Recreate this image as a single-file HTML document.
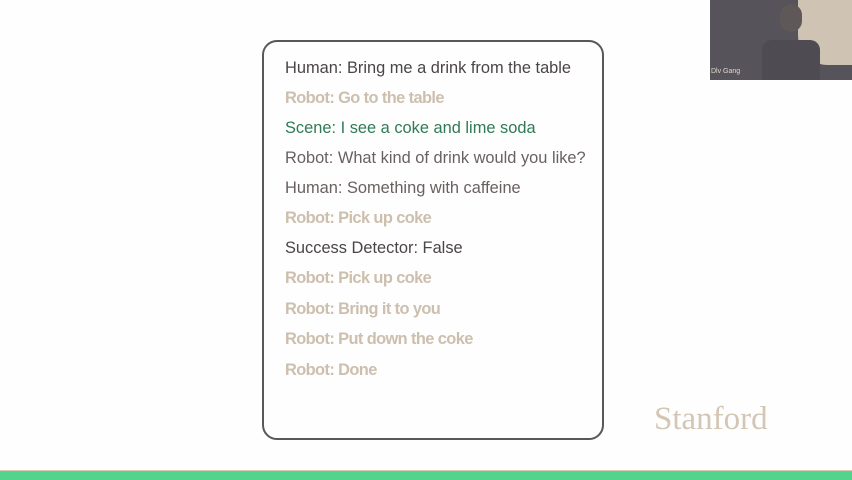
<!DOCTYPE html>
<html><head><meta charset="utf-8"><style>
html,body{margin:0;padding:0;width:852px;height:480px;overflow:hidden;background:#fefefe;position:relative;font-family:"Liberation Sans",sans-serif}
.box{position:absolute;left:262px;top:40px;width:338px;height:396px;border:2px solid #5a565a;border-radius:15px}
.l{position:absolute;left:285px;font-size:16.4px;line-height:18px;white-space:nowrap}
.d{color:#4a4548}.r{color:#cdbfae;font-weight:bold;letter-spacing:-0.6px}.g{color:#2f7a56}.m{color:#6a6060}
.cam{position:absolute;left:710px;top:0;width:142px;height:80px;background:#57535b;overflow:hidden}
.stan{position:absolute;left:654px;top:401px;font-family:"Liberation Serif",serif;font-size:33px;color:#d4c6b4}
.bar{position:absolute;left:0;top:470px;width:852px;height:10px;background:#52d48c;border-top:1px solid #d6c8b4}
</style></head><body>
<div class="box"></div>
<div class="l d" style="top:59px">Human: Bring me a drink from the table</div>
<div class="l r" style="top:89px">Robot: Go to the table</div>
<div class="l g" style="top:119px">Scene: I see a coke and lime soda</div>
<div class="l m" style="top:149px">Robot: What kind of drink would you like?</div>
<div class="l m" style="top:179px">Human: Something with caffeine</div>
<div class="l r" style="top:209px">Robot: Pick up coke</div>
<div class="l d" style="top:239px">Success Detector: False</div>
<div class="l r" style="top:269px">Robot: Pick up coke</div>
<div class="l r" style="top:300px">Robot: Bring it to you</div>
<div class="l r" style="top:330px">Robot: Put down the coke</div>
<div class="l r" style="top:361px">Robot: Done</div>
<div class="cam">
 <div style="position:absolute;left:88px;top:0;width:54px;height:65px;background:#cfc3b3;border-radius:0 0 0 30px"></div>
 <div style="position:absolute;left:70px;top:4px;width:22px;height:28px;background:#5e5858;border-radius:11px"></div>
 <div style="position:absolute;left:52px;top:40px;width:58px;height:40px;background:#4f4b53;border-radius:10px 10px 0 0"></div>
 <div style="position:absolute;left:1px;top:68px;font-size:7px;color:#e0d6c8">Dlv Gang</div>
</div>
<div class="stan">Stanford</div>
<div class="bar"></div>
</body></html>
